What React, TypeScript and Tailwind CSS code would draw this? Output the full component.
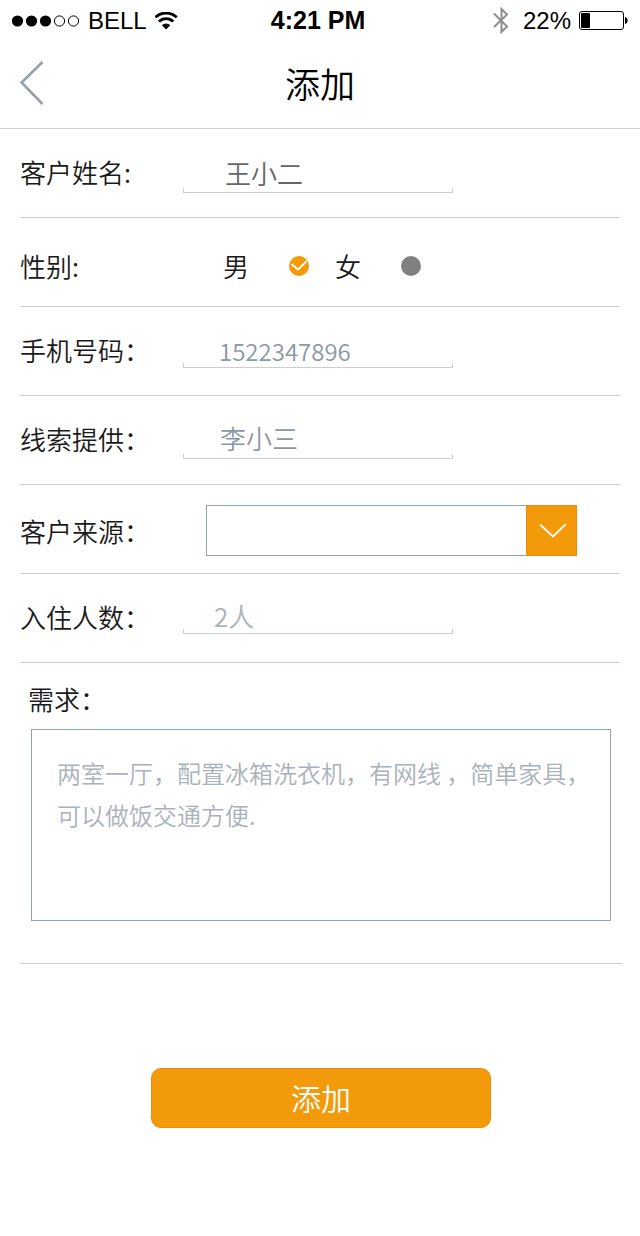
import type { ReactNode } from "react";

/* ---------- Status bar ---------- */

function Signal() {
  return (
    <svg width="68" height="12" viewBox="0 0 68 12" aria-hidden="true">
      <circle cx="5.5" cy="6" r="5.6" />
      <circle cx="19.5" cy="6" r="5.6" />
      <circle cx="33.5" cy="6" r="5.6" />
      <circle cx="47.5" cy="6" r="5.1" fill="none" stroke="#000" />
      <circle cx="61.5" cy="6" r="5.1" fill="none" stroke="#000" />
    </svg>
  );
}

function Wifi() {
  return (
    <svg width="24" height="18" viewBox="0 0 24 18" aria-hidden="true">
      <g fill="none" stroke="#000" strokeWidth="2.8">
        <path d="M0.4 5.3A15.6 15.6 0 0 1 21.8 5.3" />
        <path d="M3.9 9.6A10.2 10.2 0 0 1 18.3 9.6" />
      </g>
      <path d="M11.1 17.6 L6.9 13.3 A6 6 0 0 1 15.3 13.3 Z" />
    </svg>
  );
}

function Bluetooth() {
  return (
    <svg width="16" height="27" viewBox="0 0 16 27" aria-hidden="true">
      <path
        d="M1 6.5 L14 19.5 L8.5 25 V2 L14 7.5 L1 20"
        fill="none"
        stroke="#8e8e8e"
        strokeWidth="2"
      />
    </svg>
  );
}

function Battery() {
  return (
    <svg width="49" height="19" viewBox="0 0 49 19" aria-hidden="true">
      <rect x="0.5" y="0.5" width="44" height="18" rx="2.5" fill="none" stroke="#000" />
      <rect x="2" y="2" width="9" height="15" rx="1" />
      <path d="M46 6 C49.5 6.5 49.5 12.5 46 13 Z" />
    </svg>
  );
}

function StatusBar() {
  return (
    <div className="grid h-10 grid-cols-[1fr_auto_1fr] items-center px-3 pt-px font-['Liberation_Sans',sans-serif] text-2xl font-normal">
      <div className="flex items-center gap-2">
        <Signal />
        <span>BELL</span>
        <Wifi />
      </div>
      <span className="pr-1 text-center text-[25px] font-bold">4:21 PM</span>
      <div className="flex items-center justify-end gap-2">
        <Bluetooth />
        <span className="ml-1.5">22%</span>
        <Battery />
      </div>
    </div>
  );
}

/* ---------- Form pieces ---------- */

function Row({
  label,
  htmlFor,
  className = "",
  children,
}: {
  label: string;
  htmlFor?: string;
  className?: string;
  children: ReactNode;
}) {
  return (
    <div className={`flex h-[89px] items-center border-b border-[#c9cddc] pb-0.5 ${className}`}>
      <label htmlFor={htmlFor} id={htmlFor ? undefined : "gender"} className="w-[163px] shrink-0">
        {label}
      </label>
      {children}
    </div>
  );
}

function Field({ id, value, className }: { id: string; value: string; className: string }) {
  return (
    <div className="relative w-[270px]">
      <input
        id={id}
        type="text"
        defaultValue={value}
        className={`block w-full bg-transparent leading-8 outline-none ${className}`}
      />
      <span className="pointer-events-none absolute inset-x-0 bottom-0 h-[5px] border border-t-0 border-[#c9cddc]" />
    </div>
  );
}

function Choice({ text, checked = false }: { text: string; checked?: boolean }) {
  return (
    <label className="flex items-center gap-10">
      {text}
      <span className="grid size-5 place-items-center">
        <input
          type="radio"
          name="gender"
          defaultChecked={checked}
          className="peer col-start-1 row-start-1 size-5 appearance-none rounded-full bg-[#808080] checked:bg-[#f39a0a]"
        />
        <svg
          viewBox="0 0 20 20"
          className="pointer-events-none invisible col-start-1 row-start-1 size-5 peer-checked:visible"
          aria-hidden="true"
        >
          <path d="M2.5 8.3 L9 13.5 L17.7 5" fill="none" stroke="#fff" strokeWidth="1.8" />
        </svg>
      </span>
    </label>
  );
}

export default function App() {
  return (
    <div className="min-h-screen bg-white pb-12 font-['Noto_Sans_CJK_SC',sans-serif] font-[350] text-black">
      <StatusBar />

      <header className="grid h-[89px] grid-cols-[1fr_auto_1fr] items-center border-b border-[#d2d2d2] px-5 pb-0.5">
        <button type="button" aria-label="返回" className="justify-self-start">
          <svg width="24" height="44" viewBox="0 0 24 44" aria-hidden="true">
            <path d="M22.5 1 L1.5 21.5 L22.5 43" fill="none" stroke="#96a0ae" strokeWidth="2.6" />
          </svg>
        </button>
        <h1 className="text-[35px] font-[350]">添加</h1>
      </header>

      <form className="text-[26px] leading-8 text-[#1a1a1a]">
        <div className="px-5">
          <Row label="客户姓名:" htmlFor="name">
            <Field id="name" value="王小二" className="h-[42px] pl-[42px] text-[#666]" />
          </Row>

          <Row label="性别:" className="pt-2.5">
            <div
              role="radiogroup"
              aria-labelledby="gender"
              className="flex items-center gap-[26px] pl-10"
            >
              <Choice text="男" checked />
              <Choice text="女" />
            </div>
          </Row>

          <Row label="手机号码：" htmlFor="phone">
            <Field id="phone" value="1522347896" className="h-9 pl-9 text-2xl text-[#8b98a6]" />
          </Row>

          <Row label="线索提供：" htmlFor="referrer">
            <Field id="referrer" value="李小三" className="h-10 pb-1 pl-[37px] text-[#8b98a6]" />
          </Row>

          <Row label="客户来源：" htmlFor="source" className="pt-[5px]">
            <div className="relative ml-[23px] h-[51px] w-[371px]">
              <select
                id="source"
                className="size-full appearance-none border border-[#96a0ab] bg-white pr-14 pl-4"
              >
                <option value="" />
              </select>
              <span className="pointer-events-none absolute inset-y-0 right-0 grid w-[51px] place-items-center border border-[#f08a08] bg-[#f39a0a]">
                <svg width="28" height="16" viewBox="0 0 28 16" aria-hidden="true">
                  <path d="M2 1.5 L15 13.5 L28 1" fill="none" stroke="#fff" strokeWidth="1.8" />
                </svg>
              </span>
            </div>
          </Row>

          <Row label="入住人数：" htmlFor="people">
            <Field id="people" value="2人" className="h-[34px] pb-1 pl-[31px] text-[#a9b2bc]" />
          </Row>
        </div>

        <div className="pr-[18px] pl-5">
          <div className="border-b border-[#c9cddc] pt-5 pr-[11px] pb-[42px]">
            <label htmlFor="needs" className="block pl-2">
              需求：
            </label>
            <div className="mt-3.5 pl-[11px]">
              <textarea
                id="needs"
                defaultValue="两室一厅，配置冰箱洗衣机，有网线 ，简单家具，可以做饭交通方便."
                className="block h-48 w-full resize-none border border-[#96a0ab] pt-[22px] pr-4 pl-[25px] text-2xl leading-[42px] text-[#a9b2bc] outline-none"
              />
            </div>
          </div>

          <button
            type="submit"
            className="mx-auto mt-[104px] block h-[60px] w-[340px] rounded-[10px] border border-[#f08a08] bg-[#f39a0a] pb-0.5 text-3xl text-white"
          >
            添加
          </button>
        </div>
      </form>
    </div>
  );
}
